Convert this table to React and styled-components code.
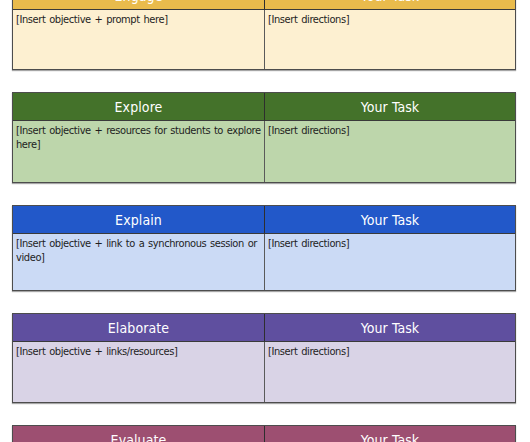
import React from "react"
import styled, { createGlobalStyle } from "styled-components"

const GlobalStyle = createGlobalStyle`
  html, body {
    margin: 0;
    padding: 0;
    background: #ffffff;
    overflow: hidden;
  }
`

const tones = {
  engage: { head: "#e9bb4c", body: "#fdf0d1" },
  explore: { head: "#44722a", body: "#bdd6ab" },
  explain: { head: "#2258c9", body: "#cbdaf5" },
  elaborate: { head: "#5f4f9f", body: "#d9d3e6" },
  evaluate: { head: "#9d4f71", body: "#e9d3dd" },
}

const Page = styled.div`
  display: flex;
  flex-direction: column;
  gap: 22px;
  width: 504px;
  margin: -19px 0 0 12px;
  font-family: "Liberation Sans Narrow", "DejaVu Sans Condensed", "Liberation Sans", sans-serif;
`

const Table = styled.div`
  display: grid;
  grid-template-columns: 1fr 1fr;
  border: 1px solid #4d4d4d;
  box-shadow: 0 1px 1px rgba(0, 0, 0, 0.35);
`

const HeadCell = styled.div`
  height: 27px;
  display: flex;
  align-items: center;
  justify-content: center;
  background: ${(p) => tones[p.$tone].head};
  color: #ffffff;
  font-size: 14px;
  letter-spacing: 0.1px;
  border-bottom: 1px solid #3a3a3a;
  & + & {
    border-left: 1px solid #2e2e2e;
  }
`

const BodyCell = styled.div`
  height: ${(p) => p.$h}px;
  padding: 3px 2px 0 3px;
  background: ${(p) => tones[p.$tone].body};
  color: #1e1e1e;
  font-size: 11px;
  letter-spacing: -0.4px;
  word-spacing: 1px;
  line-height: 14px;
  box-sizing: border-box;
  &:nth-child(4) {
    border-left: 1px solid #5a5a5a;
  }
`

const sections = [
  { tone: "engage", title: "Engage", h: 59, left: "[Insert objective + prompt here]" },
  { tone: "explore", title: "Explore", h: 61, left: "[Insert objective + resources for students to explore here]" },
  { tone: "explain", title: "Explain", h: 56, left: "[Insert objective + link to a synchronous session or video]" },
  { tone: "elaborate", title: "Elaborate", h: 60, left: "[Insert objective + links/resources]" },
  { tone: "evaluate", title: "Evaluate", h: 60, left: "[Insert objective + assessment]" },
]

export default function App() {
  return (
    <>
      <GlobalStyle />
      <Page>
        {sections.map((s) => (
          <Table key={s.tone}>
            <HeadCell $tone={s.tone}>{s.title}</HeadCell>
            <HeadCell $tone={s.tone}>Your Task</HeadCell>
            <BodyCell $tone={s.tone} $h={s.h}>{s.left}</BodyCell>
            <BodyCell $tone={s.tone} $h={s.h}>[Insert directions]</BodyCell>
          </Table>
        ))}
      </Page>
    </>
  )
}
